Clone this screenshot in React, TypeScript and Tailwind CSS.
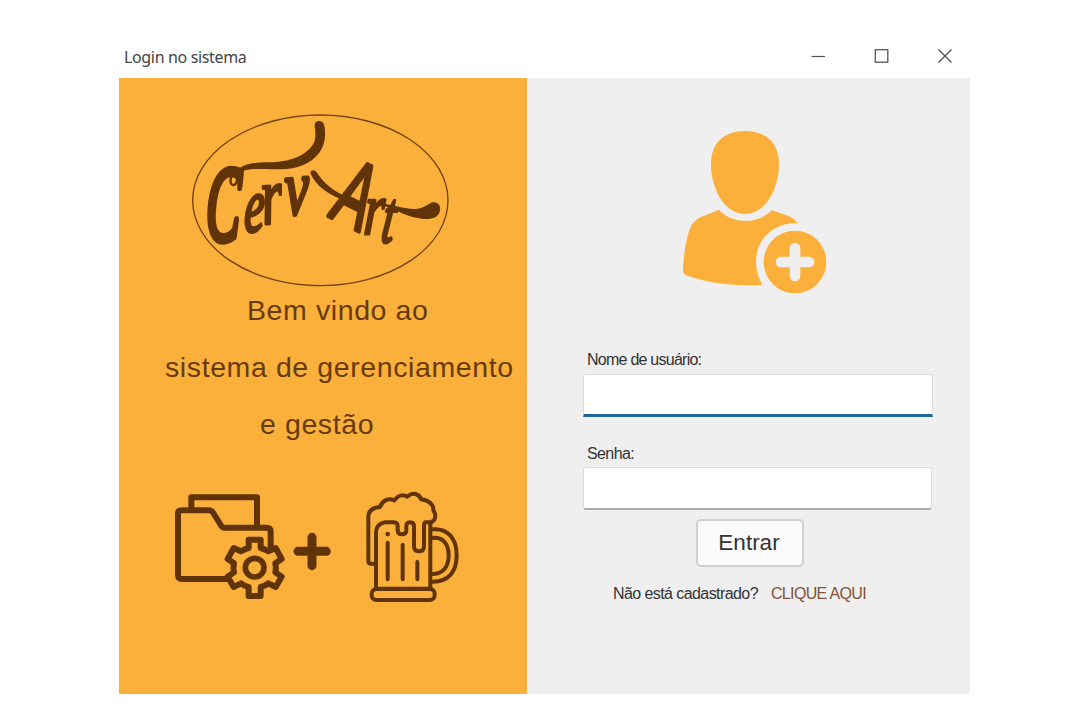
import React from "react";

function BrandLogo() {
  return (
    <svg viewBox="0 0 840 600" className="h-[200px] w-[280px] shrink-0" role="img" aria-label="CervArt">
      <ellipse cx="421" cy="301" rx="383" ry="256" fill="none" stroke="#6f420f" strokeWidth="4" />
      <g fill="#603408" stroke="#603408" strokeLinejoin="round" fontFamily="'Liberation Serif', serif" fontStyle="italic">
        <text transform="translate(76 421) skewX(-2) scale(.48 1)" fontSize="320" strokeWidth="22">C</text>
        <text transform="translate(191 396) rotate(-4) skewX(-6) scale(.6 1)" fontSize="228" strokeWidth="11">e</text>
        <text transform="translate(250 373) rotate(-4) skewX(2) scale(.68 1)" fontSize="246" strokeWidth="9">r</text>
        <text transform="translate(316 345) rotate(-5) skewX(-4) scale(.7 1)" fontSize="232" strokeWidth="12">v</text>
        <text transform="matrix(.5 .25 -.29 .925 450 350)" fontFamily="'Liberation Sans', sans-serif" fontSize="290" strokeWidth="14">A</text>
        <text transform="translate(549 402) skewX(-4) scale(.7 1)" fontSize="220" strokeWidth="9">r</text>
        <text transform="translate(599 425) skewX(-8) scale(.62 1)" fontSize="220" strokeWidth="10">t</text>
      </g>
      <g fill="#603408">
        <path d="M404 77C403 59 429 58 433 76C438 105 435 135 418 158C391 193 350 207 303 208C252 208 207 202 174 219L165 216C188 193 218 187 260 187C320 187 360 174 388 147C411 126 407 103 404 77Z" />
        <path d="M392 221C389 207 407 209 412 220C432 251 462 274 496 289C513 295 517 302 501 303C450 289 407 257 392 221Z" />
        <path d="M575 309C615 307 642 318 680 325C713 331 730 322 748 311C768 300 784 313 780 332C776 354 752 359 724 356C684 352 652 331 615 319C602 315 588 314 575 314Z" />
      </g>
      <path d="M166 216C173 232 173 253 161 255C149 256 148 235 160 222" fill="none" stroke="#603408" strokeWidth="7" />
    </svg>
  );
}

function FolderPlusBeer() {
  return (
    <svg viewBox="0 0 930 405" className="h-[135px] w-[310px] shrink-0" fill="none" stroke="#603408" strokeLinecap="round" strokeLinejoin="round">
      <g strokeWidth="18">
        <path d="M94 84V52H291V139" />
        <path d="M207 297H66Q54 297 54 285V101Q54 91 66 91H148Q155 91 160 99L184 138Q187 143 194 143H320Q332 143 332 155V199" />
        <path
          fill="#fbb03b"
          d="M266 179H302V204Q315 207 325 214L347 204L365 237L346 250Q349 264 346 277L365 290L347 321L325 310Q315 318 302 321V348H266V321Q253 318 243 310L221 321L203 290L222 277Q219 264 222 250L203 237L221 204L243 214Q253 207 266 204Z"
        />
        <circle cx="284" cy="263" r="28" strokeWidth="17" />
      </g>
      <path d="M456 172V257M414 214H499" strokeWidth="27" />
      <g strokeWidth="12">
        <path d="M643 251H632Q625 251 625 243V111Q625 84 660 81C667 61 686 53 703 61C714 45 730 43 742 50C758 34 779 42 783 58C808 61 822 75 820 91C829 104 828 121 813 127H798Q792 127 792 137V199Q792 214 777 214Q762 214 762 199V139Q762 127 750 127Q739 127 739 139V150Q739 163 726 163Q713 163 713 150V139Q713 127 702 127H675Q648 131 648 159V326" />
        <path d="M811 128V326M648 326H811" />
        <rect x="635" y="327" width="189" height="33" rx="14" />
        <path d="M816 148C865 143 890 177 890 226C890 276 865 306 816 305M816 174C845 170 866 188 866 226C866 264 846 282 816 282" />
        <path d="M683 188V298M728 194V298M772 246V298" />
      </g>
      <circle cx="683" cy="162" r="7" fill="#603408" stroke="none" />
    </svg>
  );
}

function UserPlus() {
  return (
    <svg viewBox="0 0 510 555" className="h-[185px] w-[170px] shrink-0" fill="#fbb03b">
      <path d="M225 33C285 33 327 66 327 132C327 204 288 282 225 282C162 282 123 204 123 132C123 66 165 33 225 33Z" />
      <path d="M147 269C184 313 266 314 305 270C335 283 366 285 383 310C314 305 258 357 258 423C258 448 264 472 277 494C202 500 112 491 49 466Q39 462 39 451C41 403 48 355 61 324C76 288 112 286 147 269Z" />
      <circle cx="375" cy="426" r="94" />
      <path d="M375 384V468M333 426H417" stroke="#efefef" strokeWidth="32" strokeLinecap="round" />
    </svg>
  );
}

function TitleBar() {
  return (
    <header className="flex h-10 items-center justify-between bg-white pr-[17px] pb-[3px] pl-[5px]">
      <h1 className="font-['Noto_Sans'] text-[16px] leading-5 tracking-[-0.35px] text-[#444]">Login no sistema</h1>
      <div className="flex items-center gap-12 pb-px text-[#555]">
        <button aria-label="Minimizar">
          <svg className="size-4" viewBox="0 0 16 16" stroke="currentColor" strokeWidth="1.2"><path d="M2.5 8.5H16" /></svg>
        </button>
        <button aria-label="Maximizar">
          <svg className="size-4" viewBox="0 0 16 16" fill="none" stroke="currentColor" strokeWidth="1.3"><rect x="2.3" y="1.7" width="12.5" height="12.5" /></svg>
        </button>
        <button aria-label="Fechar">
          <svg className="size-4" viewBox="0 0 16 16" stroke="currentColor" strokeWidth="1.4"><path d="M1.5 1.5L14.5 14.5M14.5 1.5L1.5 14.5" /></svg>
        </button>
      </div>
    </header>
  );
}

export default function App() {
  return (
    <div className="h-[720px] w-[1080px] overflow-hidden bg-white pt-[38px] pl-[119px] font-['Liberation_Sans',sans-serif]">
      <main className="w-[851px]">
        <TitleBar />
        <div className="flex h-[616px]">
          <section className="flex w-[408px] flex-col bg-[#fbb03b] pt-[22px]">
            <div className="pl-[61px]"><BrandLogo /></div>
            <div className="-mt-[18px] text-[28.5px] leading-[57px] tracking-[0.6px] whitespace-nowrap text-[#673b0c]">
              <p className="pl-[128px]">Bem vindo ao</p>
              <p className="pl-[46px]">sistema de gerenciamento</p>
              <p className="pl-[141px]">e gestão</p>
            </div>
            <div className="mt-[27px] pl-[41px]"><FolderPlusBeer /></div>
          </section>
          <section className="flex w-[443px] flex-col bg-[#efefef] pt-[42px]">
            <div className="pl-[143px]"><UserPlus /></div>
            <form className="flex flex-col pt-[45px] pl-[56px] text-[#333]">
              <label htmlFor="user" className="ml-1 h-[24px] text-[16px] leading-5 tracking-[-0.75px]">Nome de usuário:</label>
              <input id="user" className="h-[43px] w-[350px] rounded-t-[3px] border border-b-[3px] border-[#ddd] border-b-[#1f669d] bg-white px-3 outline-none" />
              <label htmlFor="password" className="mt-[27px] ml-1 h-[23px] text-[16px] leading-5 tracking-[-0.6px]">Senha:</label>
              <input id="password" type="password" className="h-[43px] w-[349px] rounded-[3px] border border-b-2 border-[#ddd] border-b-[#aaa] bg-white px-3 outline-none" />
              <button type="button" className="mt-[9px] ml-[113px] h-[48px] w-[108px] rounded-[5px] border-2 border-[#d0d0d0] bg-[#fbfbfb] pr-0.5 text-[22.5px]">Entrar</button>
              <p className="mt-[17px] ml-[30px] flex gap-[13px] text-[16px] leading-5 whitespace-nowrap">
                <span className="tracking-[-0.58px]">Não está cadastrado?</span>
                <a className="tracking-[-0.65px] text-[#82523a]">CLIQUE AQUI</a>
              </p>
            </form>
          </section>
        </div>
      </main>
    </div>
  );
}
